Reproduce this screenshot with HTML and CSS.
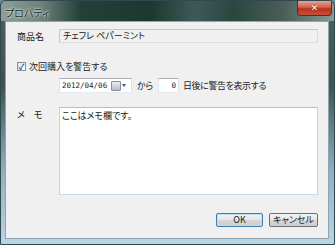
FILE: index.html
```html
<!DOCTYPE html>
<html lang="ja">
<head>
    <meta charset="UTF-8">
    <title>プロパティ</title>
    <link rel="stylesheet" href="styles.css">
</head>
<body>
    <div class="window">
        <div class="titlebar">
            <span class="title">プロパティ</span>
            <span class="close">✕</span>
        </div>
        <div class="client">
            <div class="row">
                <span class="label">商品名</span>
                <div class="field readonly">チェフレ ペパーミント</div>
            </div>

            <label class="check-row">
                <span class="checkbox">✓</span>
                <span>次回購入を警告する</span>
            </label>

            <div class="date-row">
                <div class="field date">
                    <span>2012/04/06</span>
                    <span class="cal"><span class="cal-box"></span><span class="cal-arrow"></span></span>
                </div>
                <span class="word">から</span>
                <div class="field days">0</div>
                <span class="tight">日後に警告を表示する</span>
            </div>

            <div class="row memo-row">
                <span class="label">メ　モ</span>
                <div class="field memo">ここはメモ欄です。</div>
            </div>

            <div class="buttons">
                <button class="btn default">OK</button>
                <button class="btn cancel">キャンセル</button>
            </div>
        </div>
    </div>
</body>
</html>
```

FILE: styles.css
```css
body {
    margin: 0;
    width: 335px;
    height: 245px;
    overflow: hidden;
    background: #6f8a96;
    font-family: "Noto Sans CJK JP", "DejaVu Sans", sans-serif;
    font-size: 9px;
    font-feature-settings: "palt";
    color: #1a1a1a;
}
.window {
    box-sizing: border-box;
    width: 335px;
    height: 245px;
    border: 1px solid #34464f;
    border-radius: 6px 6px 2px 2px;
    background: linear-gradient(to bottom, #4a625c 0, #3a5550 35%, #8fb0c2 70%, #bad5e6 100%);
    display: flex;
    flex-direction: column;
    overflow: hidden;
}
.titlebar {
    height: 20px;
    display: flex;
    align-items: flex-start;
    justify-content: space-between;
    background: linear-gradient(to right, #8c9e98 0, #6d837c 12%, #22403a 24%, #1c3830 45%, #3d5a58 58%, #2a4640 70%, #4a5f58 85%, #8a9a96 100%);
}
.title {
    margin: 4px 0 0 4px;
    font-size: 10px;
    color: #1e2a28;
    text-shadow: 0 0 3px #e8f0ee, 0 0 2px #e8f0ee;
}
.close {
    width: 35px;
    height: 15px;
    margin-right: 2px;
    box-sizing: border-box;
    border: 1px solid #5a2a22;
    border-top: none;
    border-radius: 0 0 4px 4px;
    background: linear-gradient(to bottom, #e4a493 0, #d0604a 45%, #b8321c 55%, #c8503a 100%);
    color: #fff;
    font-size: 9px;
    font-weight: bold;
    text-align: center;
    line-height: 14px;
    text-shadow: 0 0 2px #5a1a10;
}
.client {
    flex: 1;
    margin: 0 5px 5px 4px;
    border: 1px solid #8fa3b0;
    background: #f0f0f0;
    padding: 0 10px 0 11px;
    display: flex;
    flex-direction: column;
}
.row {
    display: flex;
    align-items: center;
    margin-top: 7px;
}
.label {
    width: 42px;
    flex: none;
}
.field {
    box-sizing: border-box;
    border: 1px solid #abadb3;
    border-color: #abadb3 #dbdfe6 #e3e9ef #e2e3ea;
    background: #fff;
    padding: 0 3px;
    white-space: nowrap;
}
.readonly {
    flex: 1;
    height: 14px;
    line-height: 12px;
    background: #f0f0f0;
    border-color: #c8c8c8 #dcdcdc #dcdcdc #c8c8c8;
}
.check-row {
    display: flex;
    align-items: center;
    gap: 3px;
    margin-top: 17px;
    height: 12px;
}
.checkbox {
    width: 9px;
    height: 9px;
    box-sizing: border-box;
    border: 1px solid #8f8f8f;
    background: linear-gradient(135deg, #dfe3e8, #fff);
    color: #2a4f9a;
    font-size: 8px;
    line-height: 7px;
    text-align: center;
    font-weight: bold;
}
.date-row {
    display: flex;
    align-items: center;
    margin: 6px 0 0 42px;
    height: 15px;
}
.date {
    width: 73px;
    height: 15px;
    display: flex;
    align-items: center;
    justify-content: space-between;
    padding: 0 5px 0 2px;
    font-family: "DejaVu Sans Mono", monospace;
    font-size: 7.5px;
}
.cal {
    display: flex;
    align-items: center;
    gap: 1px;
}
.cal-box {
    width: 8px;
    height: 8px;
    border: 1px solid #8a8f98;
    border-radius: 1px;
    background: linear-gradient(to bottom, #e8ebf0, #b8bec8);
}
.cal-arrow {
    width: 0;
    height: 0;
    border-left: 2px solid transparent;
    border-right: 2px solid transparent;
    border-top: 3px solid #3a5a9a;
}
.word {
    margin: 0 5px 0 5px;
    letter-spacing: -0.3px;
}
.days {
    width: 21px;
    height: 15px;
    line-height: 13px;
    text-align: right;
    padding-right: 2px;
    margin-right: 4px;
    font-family: "DejaVu Sans Mono", monospace;
    font-size: 7.5px;
}
.tight {
    letter-spacing: -0.4px;
}
.memo-row {
    align-items: flex-start;
    margin-top: 14px;
}
.memo-row .label {
    padding-top: 1px;
}
.memo {
    flex: 1;
    height: 88px;
    padding: 1px 2px;
    border-color: #a4bfd8 #bcd2e6 #c8dcec #bcd2e6;
}
.buttons {
    display: flex;
    justify-content: flex-end;
    gap: 6px;
    margin-top: 18px;
}
.btn {
    box-sizing: border-box;
    width: 47px;
    height: 14px;
    padding: 0;
    border: 1px solid #707070;
    border-radius: 2px;
    background: linear-gradient(to bottom, #f4f4f4 0, #e6e6e6 48%, #d6d6d6 52%, #cecece 100%);
    font-family: "Noto Sans CJK JP", "DejaVu Sans", sans-serif;
    font-size: 9px;
    font-feature-settings: "palt";
    line-height: 12px;
    color: #1a1a1a;
}
.btn.cancel {
    width: 49px;
}
.btn.default {
    border-color: #3c7fb1;
    box-shadow: inset 0 0 0 1px #b8e0f6;
}
```
